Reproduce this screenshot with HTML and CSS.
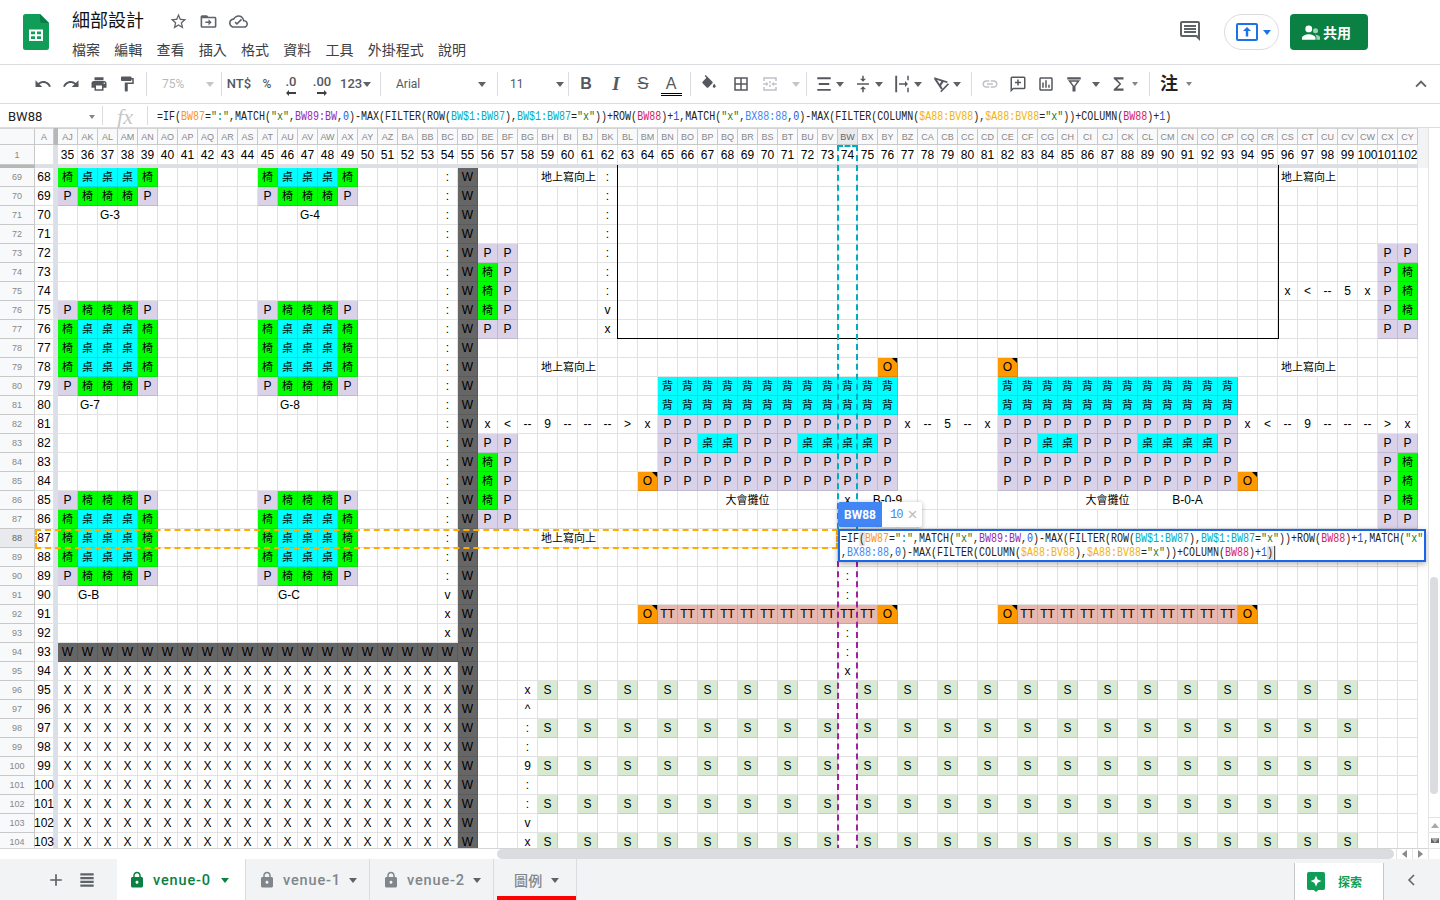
FILE: index.html
```html
<!DOCTYPE html>
<html lang="zh-Hant">
<head>
<meta charset="utf-8">
<title>細部設計</title>
<link rel="stylesheet" href="styles.css">
</head>
<body>
<div class="app">
  <header class="top">
    <svg class="logo" viewBox="0 0 26 36"><path fill="#0f9d58" d="M2.5 0H17l9 9v24.500a2.500 2.500 0 0 1-2.500 2.500h-21A2.500 2.500 0 0 1 0 33.500v-31A2.500 2.500 0 0 1 2.500 0z"/><path fill="#0a7d45" d="M17 0l9 9h-6.500A2.500 2.500 0 0 1 17 6.500z"/><path fill="#fff" d="M6 15.500h14v11.500H6zm2 2v2.800h4v-2.800zm6 0v2.800h4v-2.800zm-6 4.800v2.700h4v-2.700zm6 0v2.700h4v-2.700z"/></svg>
    <div class="titles">
      <div class="titlerow">
        <span class="doc">細部設計</span>
        <svg class="ti star" viewBox="0 0 24 24"><path d="M22 9.240l-7.190-.620L12 2 9.190 8.630 2 9.240l5.460 4.730L5.820 21 12 17.270 18.180 21l-1.630-7.030L22 9.240zM12 15.400l-3.760 2.270 1-4.280-3.320-2.880 4.380-.380L12 6.100l1.710 4.040 4.380.380-3.320 2.880 1 4.280L12 15.400z"/></svg>
        <svg class="ti" viewBox="0 0 24 24"><path d="M20 6h-8l-2-2H4c-1.100 0-2 .9-2 2v12c0 1.100.9 2 2 2h16c1.100 0 2-.9 2-2V8c0-1.100-.9-2-2-2zm0 12H4V8h16v10zm-8-1l4-4-4-4v3H8v2h4v3z"/></svg>
        <svg class="ti" viewBox="0 0 24 24"><path d="M19.350 10.040C18.670 6.590 15.640 4 12 4 9.110 4 6.600 5.640 5.350 8.040 2.340 8.360 0 10.910 0 14c0 3.310 2.690 6 6 6h13c2.760 0 5-2.240 5-5 0-2.640-2.050-4.780-4.650-4.960zM19 18H6c-2.210 0-4-1.790-4-4 0-2.050 1.530-3.760 3.560-3.970l1.070-.11.5-.95C8.080 7.140 9.940 6 12 6c2.620 0 4.880 1.860 5.390 4.430l.3 1.500 1.530.11c1.560.1 2.780 1.410 2.780 2.960 0 1.650-1.350 3-3 3zm-9-1.500l-3-3 1.400-1.400 1.600 1.600 5.100-5.100 1.400 1.400z"/></svg>
      </div>
      <nav class="menu"><span>檔案</span><span>編輯</span><span>查看</span><span>插入</span><span>格式</span><span>資料</span><span>工具</span><span>外掛程式</span><span>說明</span></nav>
    </div>
    <div class="actions">
      <svg class="cmt" viewBox="0 0 24 24"><path d="M4 2h16a2 2 0 0 1 2 2v18l-4-4H4a2 2 0 0 1-2-2V4a2 2 0 0 1 2-2zm0 2v12h15l1 1V4H4zm2 2h12v2H6zm0 3h12v2H6zm0 3h12v2H6z"/></svg>
      <div class="present">
        <svg class="pres" viewBox="0 0 22 18"><path fill="none" stroke="#1a73e8" stroke-width="2" d="M2 1h18a1 1 0 0 1 1 1v14a1 1 0 0 1-1 1H2a1 1 0 0 1-1-1V2a1 1 0 0 1 1-1z"/><path fill="#1a73e8" d="M11 4l4 4h-2.800v5.500H9.800V8H7z"/></svg>
        <i class="caret blue"></i>
      </div>
      <div class="share">
        <svg class="shi" viewBox="0 0 20 16"><circle cx="7.500" cy="4" r="3.800" fill="#fff"/><path fill="#fff" d="M0 16v-2c0-2.700 5-4 7.500-4S15 11.300 15 14v2z"/><circle cx="15" cy="6" r="2.800" fill="#9fd4b4"/><path fill="#9fd4b4" d="M16 16v-2.500c0-1.200-.6-2.200-1.500-3 2.300 0 5.500 1 5.500 3V16z"/></svg>
        <span>共用</span>
      </div>
    </div>
  </header>

  <div class="toolbar">
    <span class="tb w28"><svg viewBox="0 0 24 24"><path d="M12.500 8c-2.650 0-5.050.99-6.900 2.600L2 7v9h9l-3.620-3.620c1.390-1.160 3.160-1.880 5.120-1.880 3.540 0 6.550 2.310 7.600 5.500l2.370-.78C21.080 11.030 17.150 8 12.500 8z"/></svg></span>
    <span class="tb w28"><svg viewBox="0 0 24 24"><path d="M18.400 10.600C16.550 8.990 14.150 8 11.500 8c-4.650 0-8.580 3.030-9.960 7.220L3.900 16c1.050-3.190 4.050-5.500 7.600-5.500 1.950 0 3.730.72 5.120 1.880L13 16h9V7l-3.600 3.600z"/></svg></span>
    <span class="tb w28"><svg viewBox="0 0 24 24"><path d="M19 8H5c-1.660 0-3 1.340-3 3v6h4v4h12v-4h4v-6c0-1.660-1.340-3-3-3zm-3 11H8v-5h8v5zm3-7c-.55 0-1-.45-1-1s.45-1 1-1 1 .45 1 1-.45 1-1 1zm-1-9H6v4h12V3z"/></svg></span>
    <span class="tb w28"><svg viewBox="0 0 24 24"><path d="M18 4V3c0-.55-.45-1-1-1H5c-.55 0-1 .45-1 1v4c0 .55.45 1 1 1h12c.55 0 1-.45 1-1V6h1v4H9v11c0 .55.45 1 1 1h2c.55 0 1-.45 1-1v-9h8V4h-3z"/></svg></span>
    <i class="sep ml5"></i>
    <span class="tb zoomsel"><b class="off">75%</b><i class="caret pale"></i></span>
    <i class="sep"></i>
    <span class="tb w34 txt">NT$</span>
    <span class="tb w22 txt small">%</span>
    <span class="tb w26 stack"><span class="txt">.0</span><svg class="mini" viewBox="0 0 10 6"><path d="M0 3l3-3v2h7v2H3v2z"/></svg></span>
    <span class="tb w36 stack"><span class="txt">.00</span><svg class="mini" viewBox="0 0 10 6"><path d="M10 3L7 0v2H0v2h7v2z"/></svg></span>
    <span class="tb numfmt"><span class="txt">123</span><i class="caret"></i></span>
    <i class="sep"></i>
    <span class="tb fontsel"><span class="txt plain">Arial</span><i class="caret"></i></span>
    <i class="sep"></i>
    <span class="tb sizesel"><span class="txt plain">11</span><i class="caret"></i></span>
    <i class="sep"></i>
    <span class="tb w34 fmt bold">B</span>
    <span class="tb w26 fmt ital">I</span>
    <span class="tb w28 fmt strike">S</span>
    <span class="tb w28 under"><span class="fmt">A</span><i class="dbl"></i></span>
    <i class="sep ml5"></i>
    <span class="tb w36"><svg viewBox="0 0 24 24"><path d="M16.560 8.940L7.620 0 6.210 1.410l2.380 2.380-5.150 5.150c-.59.59-.59 1.540 0 2.120l5.500 5.500c.29.29.68.44 1.060.44s.77-.15 1.060-.44l5.500-5.500c.59-.58.59-1.530 0-2.120zM19 11.500s-2 2.170-2 3.500c0 1.100.9 2 2 2s2-.9 2-2c0-1.330-2-3.500-2-3.500z"/></svg></span>
    <span class="tb w28"><svg viewBox="0 0 24 24"><path d="M3 3v18h18V3H3zm8 16H5v-6h6v6zm0-8H5V5h6v6zm8 8h-6v-6h6v6zm0-8h-6V5h6v6z"/></svg></span>
    <span class="tb w30 dim"><svg viewBox="0 0 24 24"><path d="M3 3h18v5h-2V5H5v3H3zm0 13h2v3h14v-3h2v5H3zm0-5h4V9l3 3-3 3v-2H3zm18 0h-4V9l-3 3 3 3v-2h4zM11 8h2v3h-2zm0 5h2v3h-2z"/></svg></span>
    <span class="tb w21"><i class="caret pale"></i></span>
    <i class="sep"></i>
    <span class="drop first"><svg viewBox="0 0 24 24"><path d="M3 3h18v2.500H3zm2 7.750h14v2.500H5zM3 18.500h18V21H3z"/></svg><i class="caret"></i></span>
    <span class="drop"><svg viewBox="0 0 24 24"><path d="M8 19h3v4h2v-4h3l-4-4-4 4zm8-14h-3V1h-2v4H8l4 4 4-4zM4 11v2h16v-2H4z"/></svg><i class="caret"></i></span>
    <span class="drop"><svg viewBox="0 0 24 24"><path d="M3 1h2.500v22H3zm16 0h2v6h-2zm0 16h2v6h-2zM8 11h8V8l4 4-4 4v-3H8z"/></svg><i class="caret"></i></span>
    <span class="drop"><svg viewBox="0 0 24 24"><path d="M3 3l18 5.500-1 2.200-4.500-1.400-3.400 4.700 2 4.200-2 1.100L3 5.500zm3.500 3.400l3.700 5.700 2.300-3.300zM21 11l1.800 1.200L12.500 23l-1.600-1.300z"/></svg><i class="caret"></i></span>
    <i class="sep"></i>
    <span class="tb w28 first4 dim"><svg viewBox="0 0 24 24"><path d="M3.900 12c0-1.710 1.390-3.100 3.100-3.100h4V7H7c-2.760 0-5 2.240-5 5s2.240 5 5 5h4v-1.900H7c-1.710 0-3.100-1.390-3.100-3.100zM8 13h8v-2H8v2zm9-6h-4v1.900h4c1.710 0 3.100 1.390 3.100 3.100s-1.390 3.100-3.100 3.100h-4V17h4c2.760 0 5-2.240 5-5s-2.240-5-5-5z"/></svg></span>
    <span class="tb w28"><svg viewBox="0 0 24 24"><path d="M4 2h16a2 2 0 0 1 2 2v13a2 2 0 0 1-2 2H6l-4 4V4a2 2 0 0 1 2-2zm0 2v14l1.500-1H20V4H4zm7 2h2v3h3v2h-3v3h-2v-3H8V9h3z"/></svg></span>
    <span class="tb w28"><svg viewBox="0 0 24 24"><path d="M19 3H5c-1.100 0-2 .9-2 2v14c0 1.100.9 2 2 2h14c1.100 0 2-.9 2-2V5c0-1.100-.9-2-2-2zm0 16H5V5h14v14zM7 10h2v7H7zm4-3h2v10h-2zm4 6h2v4h-2z"/></svg></span>
    <span class="wide filt"><svg viewBox="0 0 24 24"><path d="M3 3h18v3H3zm1 4h16l-6 8v7h-4v-7zm4 2l4 5.500L16 9z"/></svg><i class="caret"></i></span>
    <span class="wide sig"><svg viewBox="0 0 24 24"><path d="M18 3H5v2l7.500 7L5 19v2h13v-3H9.500l5.500-6-5.500-6H18z"/></svg><i class="caret tiny"></i></span>
    <i class="sep ml9"></i>
    <span class="wide note"><span class="chu">注</span><i class="caret tiny"></i></span>
    <span class="tb w24 collapse"><svg viewBox="0 0 24 24"><path d="M12 7l-7.500 7.500 1.800 1.800L12 10.600l5.700 5.700 1.800-1.800z"/></svg></span>
  </div>

  <div class="fbar">
    <div class="namebox"><span>BW88</span><i class="caret tiny"></i></div>
    <i class="fsep"></i>
    <span class="fx">fx</span>
    <i class="fsep"></i>
    <div class="formula">=IF(<span class="f-or">BW87</span>=<span class="f-gr">":"</span>,MATCH(<span class="f-gr">"x"</span>,<span class="f-pu">BW89:BW</span>,<span class="f-nu">0</span>)-MAX(FILTER(ROW(<span class="f-cy">BW$1:BW87</span>),<span class="f-cy">BW$1:BW87</span>=<span class="f-gr">"x"</span>))+ROW(<span class="f-cr">BW88</span>)+<span class="f-nu">1</span>,MATCH(<span class="f-gr">"x"</span>,<span class="f-bl">BX88:88</span>,<span class="f-nu">0</span>)-MAX(FILTER(COLUMN(<span class="f-am">$A88:BV88</span>),<span class="f-am">$A88:BV88</span>=<span class="f-gr">"x"</span>))+COLUMN(<span class="f-cr">BW88</span>)+<span class="f-nu">1</span>)</div>
  </div>

  <main class="work">
    <div class="pane">
      <div class="sheet">
        <div id="grid"></div>
        <div class="rng cyanbox"></div>
        <div class="rng purplebox"></div>
        <div class="rng orangebox"></div>
        <div class="blackbox"></div>
        <div class="hint"><b>BW88</b><span class="hv">10</span><span class="hx">×</span></div>
        <div class="editor">
          <div>=IF<span class="pm">(</span><span class="f-or">BW87</span>=<span class="f-gr">":"</span>,MATCH(<span class="f-gr">"x"</span>,<span class="f-pu">BW89:BW</span>,<span class="f-nu">0</span>)-MAX(FILTER(ROW(<span class="f-cy">BW$1:BW87</span>),<span class="f-cy">BW$1:BW87</span>=<span class="f-gr">"x"</span>))+ROW(<span class="f-cr">BW88</span>)+<span class="f-nu">1</span>,MATCH(<span class="f-gr">"x"</span></div>
          <div>,<span class="f-bl">BX88:88</span>,<span class="f-nu">0</span>)-MAX(FILTER(COLUMN(<span class="f-am">$A88:BV88</span>),<span class="f-am">$A88:BV88</span>=<span class="f-gr">"x"</span>))+COLUMN(<span class="f-cr">BW88</span>)+<span class="f-nu">1</span><span class="pm">)</span><i class="cursor"></i></div>
        </div>
      </div>
      <div class="hscroll">
        <div class="htrack"><div class="hthumb"></div></div>
        <span class="harrow"><i class="tri l"></i></span>
        <span class="harrow"><i class="tri r"></i></span>
      </div>
    </div>
    <aside class="vscroll">
      <div class="vthumb"></div>
      <span class="varrow first"><i class="tri u"></i></span>
      <span class="varrow"><i class="tri d"></i></span>
    </aside>
  </main>

  <footer class="tabs">
    <div class="tabctl">
      <svg viewBox="0 0 24 24"><path d="M19 13h-6v6h-2v-6H5v-2h6V5h2v6h6z"/></svg>
      <svg viewBox="0 0 24 24"><path d="M4 4h16v2.500H4zm0 4.500h16V11H4zM4 13h16v2.500H4zm0 4.500h16V20H4z"/></svg>
    </div>
    <div class="tab active t0">
      <svg class="lock" viewBox="0 0 24 24"><path d="M18 8h-1V6c0-2.760-2.240-5-5-5S7 3.240 7 6v2H6c-1.100 0-2 .9-2 2v10c0 1.100.9 2 2 2h12c1.100 0 2-.9 2-2V10c0-1.100-.9-2-2-2zm-6 9c-1.100 0-2-.9-2-2s.9-2 2-2 2 .9 2 2-.9 2-2 2zM9 8V6c0-1.660 1.340-3 3-3s3 1.340 3 3v2H9z"/></svg>
      <span class="tname">venue-0</span><i class="caret green"></i>
    </div>
    <div class="tab t1">
      <svg class="lock" viewBox="0 0 24 24"><path d="M18 8h-1V6c0-2.760-2.240-5-5-5S7 3.240 7 6v2H6c-1.100 0-2 .9-2 2v10c0 1.100.9 2 2 2h12c1.100 0 2-.9 2-2V10c0-1.100-.9-2-2-2zm-6 9c-1.100 0-2-.9-2-2s.9-2 2-2 2 .9 2 2-.9 2-2 2zM9 8V6c0-1.660 1.340-3 3-3s3 1.340 3 3v2H9z"/></svg>
      <span class="tname">venue-1</span><i class="caret"></i>
    </div>
    <div class="tab t1">
      <svg class="lock" viewBox="0 0 24 24"><path d="M18 8h-1V6c0-2.760-2.240-5-5-5S7 3.240 7 6v2H6c-1.100 0-2 .9-2 2v10c0 1.100.9 2 2 2h12c1.100 0 2-.9 2-2V10c0-1.100-.9-2-2-2zm-6 9c-1.100 0-2-.9-2-2s.9-2 2-2 2 .9 2 2-.9 2-2 2zM9 8V6c0-1.660 1.340-3 3-3s3 1.340 3 3v2H9z"/></svg>
      <span class="tname">venue-2</span><i class="caret"></i>
    </div>
    <div class="tab t3"><span class="tname">圖例</span><i class="caret"></i></div>
    <div class="explore">
      <svg viewBox="0 0 20 22"><path fill="#0f9d58" d="M2 0h16a2 2 0 0 1 2 2v16a2 2 0 0 1-2 2h-5.500L10 22l-2.500-2H2a2 2 0 0 1-2-2V2a2 2 0 0 1 2-2z"/><path fill="#fff" d="M10 4l1.800 4.200L16 10l-4.200 1.800L10 16l-1.800-4.200L4 10l4.200-1.800z"/></svg>
      <span>探索</span>
    </div>
    <svg class="sidebar" viewBox="0 0 24 24"><path d="M15.400 6L14 4.600 6.600 12l7.400 7.400 1.400-1.400-6-6z"/></svg>
  </footer>
</div>
<script src="grid.js"></script>
</body>
</html>
```
FILE: styles.css
```css
* { box-sizing: border-box; }
html, body { margin: 0; height: 100%; overflow: hidden; background: #fff; }
body { font-family: "Liberation Sans", "Noto Sans CJK TC", sans-serif; color: #000; }
i { font-style: normal; display: block; }
svg { display: block; fill: currentColor; }

.app { width: 1440px; height: 900px; display: flex; flex-direction: column; }

/* title bar */
.top { height: 65px; flex: none; border-bottom: 1px solid #dadce0; display: flex; padding-left: 23px; }
.logo { width: 26px; height: 36px; margin-top: 14px; }
.titles { margin-left: 23px; padding-top: 9px; }
.titlerow { display: flex; align-items: center; height: 24px; color: #5f6368; }
.doc { font-size: 18px; line-height: 24px; color: #111; width: 71px; white-space: nowrap; }
.ti { width: 19px; height: 19px; margin-right: 11px; }
.star { margin-left: 26px; }
.menu { display: flex; gap: 14.25px; margin-top: 6px; font-size: 14px; line-height: 22px; color: #3c4043; }
.actions { margin-left: auto; padding: 14px 72px 0 0; display: flex; height: 64px; }
.cmt { width: 24px; height: 24px; color: #5f6368; margin: 5px 22px 0 0; }
.present { width: 55px; height: 36px; border: 1px solid #dadce0; border-radius: 18px; display: flex; align-items: center; padding-left: 11px; gap: 5px; }
.pres { width: 22px; height: 18px; }
.share { width: 78px; height: 36px; margin-left: 11px; background: #0b8043; border-radius: 4px; color: #fff; display: flex; align-items: center; padding-left: 12px; gap: 3px; font-size: 14px; font-weight: 700; }
.shi { width: 18px; height: 15px; }

/* carets */
.caret { width: 0; height: 0; border: 4px solid transparent; border-top: 5px solid #5f6368; border-bottom: 0; flex: none; }
.caret.blue { border-top-color: #1a73e8; }
.caret.green { border-top-color: #0b8043; }
.caret.pale { border-top-color: #c4c7ca; }
.caret.tiny { border-width: 3px; border-top-width: 4px; border-bottom-width: 0; border-top-color: #80868b; }

/* toolbar */
.toolbar { height: 39px; flex: none; border-bottom: 1px solid #dadce0; display: flex; align-items: center; padding-left: 29px; color: #55585c; }
.toolbar svg { width: 18px; height: 18px; }
.tb { height: 38px; display: flex; align-items: center; justify-content: center; flex: none; }
.w21 { width: 21px; } .w22 { width: 22px; } .w24 { width: 24px; } .w26 { width: 26px; } .w28 { width: 28px; }
.w30 { width: 30px; } .w34 { width: 34px; } .w36 { width: 36px; }
.sep { width: 1px; height: 24px; background: #dadce0; flex: none; }
.ml5 { margin-left: 5px; } .ml9 { margin-left: 9px; }
.txt { font: 500 13px/14px Roboto, "Liberation Sans", sans-serif; color: #55585c; }
.txt.small { font-size: 12px; }
.txt.plain { font-weight: 400; font-size: 12px; }
.stack { flex-direction: column; gap: 0; padding-top: 2px; }
.toolbar .mini { width: 10px; height: 6px; margin-top: 1px; color: #3c4043; }
.zoomsel { width: 74px; justify-content: flex-start; padding-left: 15px; gap: 19px; }
.off { font: 400 12px Roboto, sans-serif; color: #b8babd; width: 25px; }
.numfmt { width: 40px; justify-content: flex-start; gap: 1px; }
.fontsel { width: 116px; justify-content: flex-start; padding-left: 15px; }
.fontsel .caret { margin-left: 58px; }
.sizesel { width: 70px; justify-content: flex-start; padding-left: 12px; }
.sizesel .caret { margin-left: 32px; }
.fmt { font-size: 16px; color: #55585c; font-family: "Liberation Sans", sans-serif; }
.bold { font-weight: 700; }
.ital { font: italic 700 19px "Liberation Serif", serif; }
.strike { text-decoration: line-through; font-size: 17px; }
.under { flex-direction: column; padding-top: 3px; }
.under .fmt { line-height: 16px; }
.dbl { width: 21px; height: 3px; border-top: 1px solid #000; border-bottom: 1px solid #000; margin-top: 1px; }
.dim { color: #bdc1c6; }
.drop { width: 39px; height: 38px; display: flex; align-items: center; gap: 3px; flex: none; }
.drop.first { margin-left: 8px; }
.first4 { margin-left: 4px; }
.wide { height: 38px; display: flex; align-items: center; flex: none; }
.filt { margin-left: 5px; width: 45px; gap: 9px; }
.sig { width: 30px; gap: 4px; }
.note { margin-left: 10px; gap: 8px; }
.chu { font-size: 18px; font-weight: 700; color: #222; line-height: 20px; width: 18px; }
.collapse { margin-left: auto; margin-right: 7px; color: #5f6368; }

/* formula bar */
.fbar { height: 24px; flex: none; border-bottom: 1px solid #dadce0; display: flex; align-items: center; padding-top: 2px; }
.namebox { width: 102px; display: flex; align-items: center; justify-content: space-between; padding: 0 7px 0 8px; font: 400 13px Roboto, sans-serif; color: #202124; }
.fsep { width: 1px; height: 19px; background: #dadce0; flex: none; margin-top: -2px; }
.fx { width: 44px; text-align: center; font: italic 22px/20px "Liberation Serif", serif; color: #c4c7ca; }
.formula { margin-left: 9px; white-space: nowrap; transform: scaleX(.8333); transform-origin: 0 50%; }
.formula, .editor { font: 12px/14px "Liberation Mono", monospace; color: #222; }
.f-or { color: #ff9800; } .f-gr { color: #0b8043; } .f-pu { color: #9c27b0; } .f-nu { color: #1a56db; }
.f-cy { color: #00acc1; } .f-cr { color: #d81b60; } .f-bl { color: #4285f4; } .f-am { color: #f4b400; }

/* sheet area */
.work { flex: 1; display: flex; min-height: 0; }
.pane { width: 1428px; display: flex; flex-direction: column; }
.sheet { position: relative; height: 721px; overflow: hidden; border-bottom: 1px solid #d4d4d4; }
.hrow, .r { display: flex; }
.hrow { height: 17px; }
.rowone { height: 20px; }
.r { height: 19px; }
.fz { height: 3px; width: 1418px; background: #dadfe8; }
.fz::before { content: ""; display: block; width: 35px; height: 3px; background: #b7b7b7; }
.rh { width: 35px; flex: none; background: #f8f9fa; border-right: 1px solid #c8c8c8; border-bottom: 1px solid #c8c8c8; font-size: 9px; color: #888; display: flex; align-items: center; justify-content: center; }
.ch { width: 20px; flex: none; background: #f8f9fa; border-right: 1px solid #c8c8c8; border-bottom: 1px solid #c8c8c8; border-top: 1px solid #d4d4d4; font-size: 9px; color: #888; display: flex; align-items: center; justify-content: center; }
.ch.corner { width: 35px; }
.ch.ca { width: 19px; }
.ch.sel, .rh.sel { background: #e8eaed; color: #666; }
.fb { width: 4px; flex: none; background: #dadfe8; }
.fb.g { background: #b7b7b7; }
.cap { width: 10px; flex: none; background: #f1f3f4; }
.capfull { height: 3px; }
.c { width: 20px; height: 100%; flex: none; border-right: 1px solid rgba(0,0,0,.115); border-bottom: 1px solid rgba(0,0,0,.115); display: flex; align-items: center; justify-content: center; font-size: 12px; line-height: 18px; white-space: nowrap; }
.c.a { width: 19px; }
.c.cjk { font-size: 11px; }
.c.s3 { width: 60px; }
.c.left { justify-content: flex-start; padding-left: 3px; }
.c.pad2 { justify-content: flex-start; padding-left: 2px; }
.c.pad0 { justify-content: flex-start; }
.g { background: #00ff00; } .b { background: #00ffff; } .p { background: #d9d2e9; }
.d { background: #666; } .o { background: #ff9900; position: relative; } .t { background: #e6b8af; } .s { background: #d9ead3; }
.o::after { content: ""; position: absolute; top: 0; right: 0; border-top: 5px solid #000; border-left: 5px solid transparent; }

.rng { position: absolute; border: 2px dashed; z-index: 3; pointer-events: none; }
.cyanbox { left: 837px; top: 17px; width: 21px; height: 384px; border-color: #00acc1; border-bottom: 0; }
.purplebox { left: 837px; top: 433px; width: 21px; height: 300px; border-color: #a020a0; border-top: 0; }
.orangebox { left: 35px; top: 401px; width: 803px; height: 20px; border-color: #ffab00; }
.blackbox { position: absolute; left: 617px; top: 37px; width: 662px; height: 174px; border: 1px solid #000; border-top: 0; z-index: 2; }
.hint { position: absolute; left: 838px; top: 374px; height: 25px; width: 84px; display: flex; align-items: center; background: #fff; border-radius: 2px; box-shadow: 0 1px 5px rgba(0,0,0,.3); z-index: 4; }
.hint b { width: 44px; height: 25px; background: #4285f4; color: #fff; font: 700 12px/26px Roboto, sans-serif; text-align: center; border-radius: 2px 0 0 2px; }
.hv { font: 12px "Liberation Mono", monospace; letter-spacing: -1px; color: #4285f4; margin-left: 8px; }
.hx { color: #bbb; font-size: 17px; margin-left: 5px; line-height: 20px; }
.editor { position: absolute; left: 838px; top: 401px; width: 588px; height: 33px; border: 2px solid #1a66e8; background: #fff; padding: 1px 0 0 1px; box-shadow: 0 2px 6px rgba(0,0,0,.3); z-index: 5; white-space: nowrap; }
.editor > div { height: 14px; display: flex; width: 700px; transform: scaleX(.8333); transform-origin: 0 50%; }
.pm { background: #e3e3e3; }
.cursor { width: 1px; height: 14px; background: #000; margin-left: 1px; }

/* scrollbars */
.hscroll { height: 10px; flex: none; display: flex; background: #fff; }
.htrack { flex: 1; padding-left: 497px; }
.hthumb { width: 897px; height: 10px; background: #dadce0; border-radius: 5px; }
.harrow { width: 16px; display: flex; align-items: center; justify-content: center; border-left: 1px solid #e4e4e4; }
.tri { width: 0; height: 0; border: 4px solid transparent; }
.tri.l { border-left: 0; border-right: 5px solid #8a8a8a; }
.tri.r { border-right: 0; border-left: 5px solid #8a8a8a; }
.tri.u { border-top: 0; border-bottom: 5px solid #a9a9a9; }
.tri.d { border-bottom: 0; border-top: 5px solid #a9a9a9; }
.vscroll { width: 12px; flex: none; border-left: 1px solid #e4e4e4; padding-top: 449px; }
.vthumb { width: 8px; height: 217px; margin-left: 1px; background: #dadce0; border-radius: 4px; }
.varrow { height: 16px; display: flex; align-items: center; justify-content: center; border-bottom: 1px solid #e4e4e4; }
.varrow.first { margin-top: 23px; border-top: 1px solid #e4e4e4; }

/* sheet tabs */
.tabs { height: 41px; flex: none; background: #f1f3f4; display: flex; }
.tabctl { width: 117px; display: flex; align-items: center; padding-left: 46px; gap: 11px; color: #5f6368; }
.tabctl svg { width: 20px; height: 20px; }
.tab { height: 41px; display: flex; align-items: center; flex: none; border-right: 1px solid #dadce0; padding-top: 1px; }
.t0 { width: 129px; padding-left: 11px; }
.t1 { width: 124px; padding-left: 12px; }
.tab.t3 { width: 80px; margin-left: 3px; padding-left: 17px; position: relative; }
.t3::after { content: ""; position: absolute; left: 0; right: 0; bottom: 0; height: 4px; background: #f00; }
.active { background: #fff; }
.lock { width: 18px; height: 20px; color: #80868b; flex: none; }
.active .lock { color: #0b8043; }
.tname { font: 500 14.500px Roboto, "Noto Sans CJK TC", sans-serif; color: #80868b; margin: 0 8px 0 7px; letter-spacing: .85px; white-space: nowrap; }
.t3 .tname { margin-left: 0; font-size: 14px; letter-spacing: .3px; }
.active .tname { color: #0b8043; margin-right: 10px; }
.explore { margin-left: auto; margin-top: 4px; width: 90px; height: 37px; background: #fff; border-left: 1px solid #c8c8c8; border-right: 1px solid #c8c8c8; display: flex; align-items: center; padding-left: 12px; gap: 13px; font-size: 12px; font-weight: 700; color: #0f9d58; }
.explore svg { width: 18px; height: 20px; }
.explore span { margin-top: -1px; }
.sidebar { width: 18px; height: 18px; color: #5f6368; margin: 12px 19px 0 19px; }
```
FILE: grid.js
```js
// Builds the visible window of the sheet (rows 69-104, columns A + AJ..CY) from data.
const FIRST = 35, LAST = 102, TOP = 68, BOTTOM = 103;
const CLS = { '椅': 'g cjk', '桌': 'b cjk', '背': 'b cjk', P: 'p', O: 'o', TT: 't', S: 's', W: 'd' };
const cells = {};
const put = (v, col, tokens) => {
  tokens.split(' ').forEach((t, i) => {
    (cells[v] = cells[v] || {})[col + i] = { t, c: CLS[t] || '' };
  });
};
const label = (v, col, t, c) => { (cells[v] = cells[v] || {})[col] = { t, c, span: 3 }; };
const rep = (t, n) => Array(n).fill(t).join(' ');

const DESK = '椅 桌 桌 桌 椅', CHAIR = 'P 椅 椅 椅 P';
[68, 76, 77, 78, 86, 87, 88].forEach(v => { put(v, 35, DESK); put(v, 45, DESK); });
[69, 75, 79, 85, 89].forEach(v => { put(v, 35, CHAIR); put(v, 45, CHAIR); });

[[70, 37, 'G-3', 'pad2'], [70, 47, 'G-4', 'pad2'], [80, 36, 'G-7', 'pad2'], [80, 46, 'G-8', 'pad2'], [90, 36, 'G-B', 'pad0'], [90, 46, 'G-C', 'pad0']]
  .forEach(([v, c, t, k]) => { cells[v] = cells[v] || {}; cells[v][c] = { t, c: k }; });

for (let v = 68; v <= 92; v++) put(v, 54, v <= 89 ? ':' : v === 90 ? 'v' : 'x');
for (let v = TOP; v <= BOTTOM; v++) put(v, 55, 'W');
put(93, 35, rep('W', 20));
for (let v = 94; v <= BOTTOM; v++) put(v, 35, rep('X', 20));

[[72, 'P P'], [73, '椅 P'], [74, '椅 P'], [75, '椅 P'], [76, 'P P'], [82, 'P P'], [83, '椅 P'], [84, '椅 P'], [85, '椅 P'], [86, 'P P']]
  .forEach(([v, s]) => put(v, 56, s));
[[72, 'P P'], [73, 'P 椅'], [74, 'P 椅'], [75, 'P 椅'], [76, 'P P'], [82, 'P P'], [83, 'P 椅'], [84, 'P 椅'], [85, 'P 椅'], [86, 'P P']]
  .forEach(([v, s]) => put(v, 101, s));

[68, 78, 87].forEach(v => label(v, 59, '地上寫向上', 'left cjk s3'));
[68, 78].forEach(v => label(v, 96, '地上寫向上', 'left cjk s3'));
[68, 69, 70, 71, 72, 73, 74].forEach(v => put(v, 62, ':'));
put(75, 62, 'v'); put(76, 62, 'x');
put(74, 96, 'x < -- 5 x');

put(78, 76, 'O'); put(78, 82, 'O');
[79, 80].forEach(v => { put(v, 65, rep('背', 12)); put(v, 82, rep('背', 12)); });
put(81, 56, 'x < -- 9 -- -- -- > x');
put(81, 65, rep('P', 12));
put(81, 77, 'x -- 5 -- x');
put(81, 82, rep('P', 12));
put(81, 94, 'x < -- 9 -- -- -- > x');
const MIX = 'P P 桌 桌 P P P 桌 桌 桌 桌 P';
put(82, 65, MIX); put(82, 82, MIX);
[83, 84].forEach(v => { put(v, 65, rep('P', 12)); put(v, 82, rep('P', 12)); });
put(84, 64, 'O'); put(84, 94, 'O');
label(85, 68, '大會攤位', 'cjk s3'); label(85, 86, '大會攤位', 'cjk s3');
put(85, 74, 'x');
label(85, 75, 'B-0-9', 's3'); label(85, 90, 'B-0-A', 's3');
[89, 90, 92, 93].forEach(v => put(v, 74, ':'));
put(94, 74, 'x');

put(91, 64, 'O ' + rep('TT', 11) + ' O');
put(91, 82, 'O ' + rep('TT', 11) + ' O');

[95, 97, 99, 101, 103].forEach(v => { for (let c = 59; c <= 99; c += 2) put(v, c, 'S'); });
[[95, 'x'], [96, '^'], [97, ':'], [98, ':'], [99, '9'], [100, ':'], [101, ':'], [102, 'v'], [103, 'x']]
  .forEach(([v, t]) => put(v, 58, t));

const colName = i => {
  let s = '';
  for (i = i + 1; i > 0; i = Math.floor((i - 1) / 26)) s = String.fromCharCode(65 + (i - 1) % 26) + s;
  return s;
};
const div = (cls, text) => `<div class="${cls}">${text === undefined ? '' : text}</div>`;

let html = '<div class="hrow">' + div('ch corner') + div('ch ca', 'A') + div('fb g');
for (let v = FIRST; v <= LAST; v++) html += div('ch' + (v === 74 ? ' sel' : ''), colName(v));
html += div('cap') + '</div><div class="hrow rowone">' + div('rh', '1') + div('c a') + div('fb');
for (let v = FIRST; v <= LAST; v++) html += div('c', v);
html += div('cap') + '</div><div class="hrow capfull">' + div('fz') + div('cap') + '</div>';

for (let v = TOP; v <= BOTTOM; v++) {
  const row = cells[v] || {};
  html += '<div class="r">' + div('rh' + (v === 87 ? ' sel' : ''), v + 1) + div('c a', v) + div('fb');
  for (let c = FIRST; c <= LAST; c++) {
    const cell = row[c];
    if (!cell) { html += div('c'); continue; }
    html += div('c ' + cell.c, cell.t.replace(/</g, '&lt;').replace(/>/g, '&gt;'));
    if (cell.span) c += cell.span - 1;
  }
  html += '</div>';
}
document.getElementById('grid').innerHTML = html;
```
